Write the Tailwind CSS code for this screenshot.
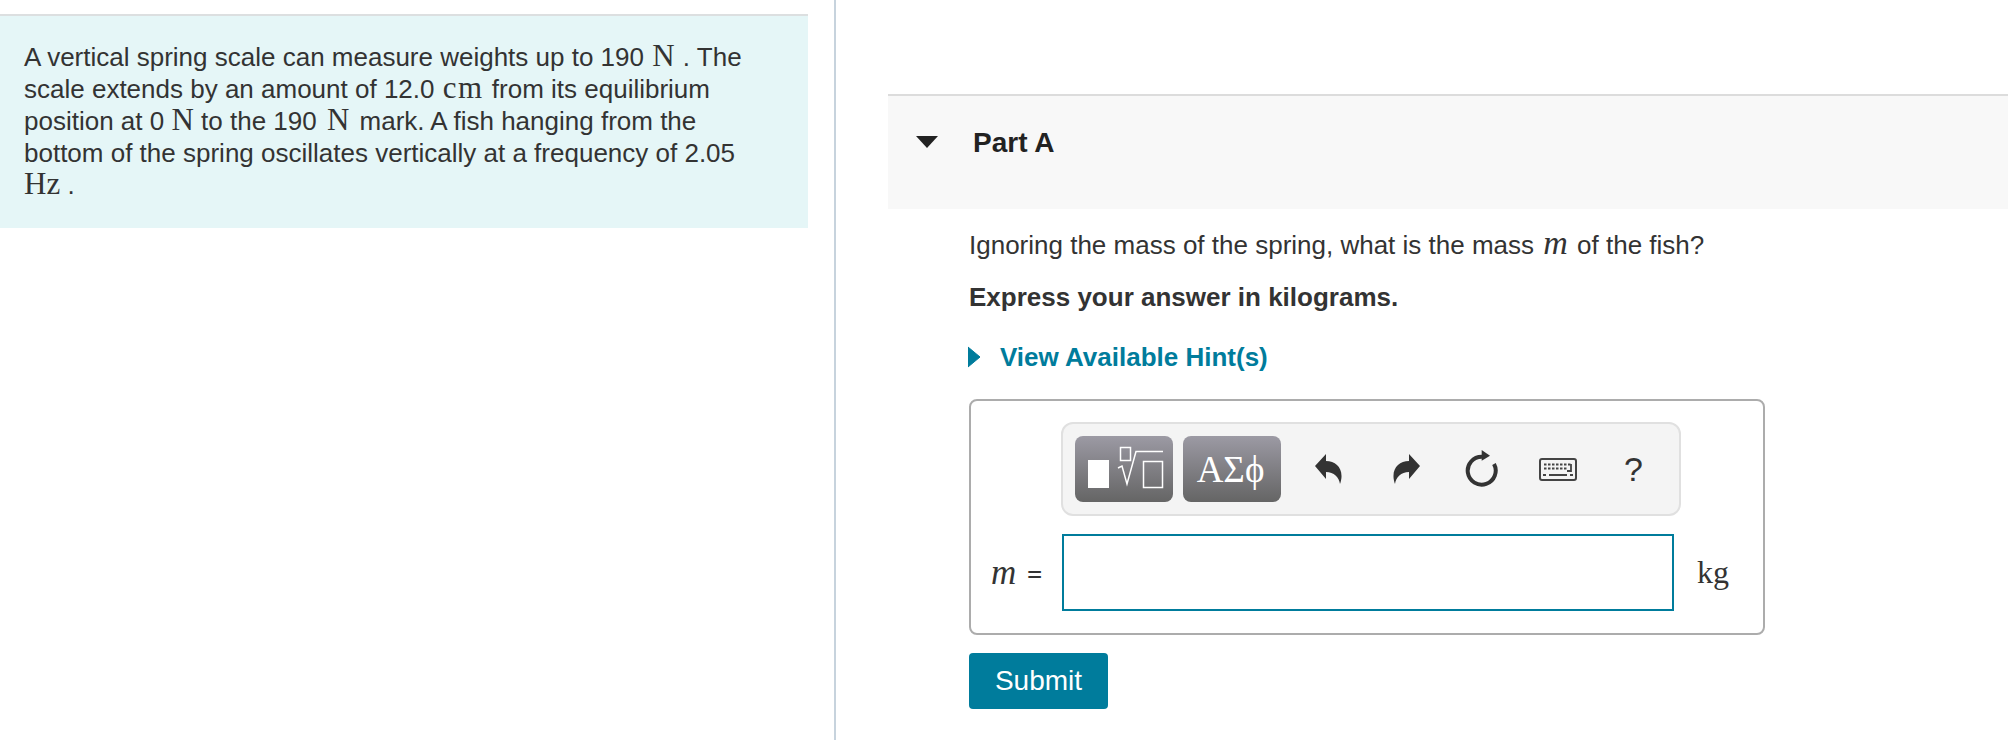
<!DOCTYPE html>
<html lang="en">
<head>
  <meta charset="UTF-8" />
  <title>Part A</title>
  <script src="https://cdn.jsdelivr.net/npm/@tailwindcss/browser@4"></script>
</head>
<body class="bg-white font-['Liberation_Sans',Arial,sans-serif] text-[#333]">
  <div class="flex h-[740px] w-[2008px] overflow-hidden">

    <!-- left column: problem statement -->
    <div class="w-[836px] h-full shrink-0 border-r-2 border-[#c7d3dd] pr-[26px] pt-[14px]">
      <div class="h-[214px] border-t-2 border-[#dcdfe0] bg-[#e5f6f7] pl-[24px] pr-[40px] pt-[25px] text-[26px] leading-[32px] whitespace-nowrap">
        A vertical spring scale can measure weights up to 190 <span class="font-['Liberation_Serif',serif] text-[31px] leading-[0] mx-px">N</span> . The<br>
        scale extends by an amount of 12.0 <span class="font-['Liberation_Serif',serif] text-[31px] leading-[0] tracking-[1.5px] mx-px">cm</span> from its equilibrium<br>
        position at 0 <span class="font-['Liberation_Serif',serif] text-[31px] leading-[0]">N</span> to the 190 <span class="font-['Liberation_Serif',serif] text-[31px] leading-[0] mx-[3px]">N</span> mark. A fish hanging from the<br>
        bottom of the spring oscillates vertically at a frequency of 2.05<br>
        <span class="font-['Liberation_Serif',serif] text-[31px] leading-[0]">Hz</span> .
      </div>
    </div>

    <!-- right column: part A -->
    <div class="flex-1 pl-[52px] pt-[94px]">
      <div class="flex h-[115px] items-start border-t-2 border-[#dcdcdc] bg-[#f8f8f8] pl-[28px] pt-[31px]">
        <svg class="mt-[9px] w-[22px] h-[12px]" viewBox="0 0 22 12"><path d="M0 0H22L11 12Z" fill="#222"/></svg>
        <h2 class="ml-[35px] text-[28px] leading-[32px] font-bold text-[#222]">Part A</h2>
      </div>

      <div class="pl-[81px] pr-[240px]">
        <p class="mt-[20px] text-[26px] leading-[32px] whitespace-nowrap">Ignoring the mass of the spring, what is the mass <span class="font-['Liberation_Serif',serif] italic text-[34px] leading-[0] mx-[2px]">m</span> of the fish?</p>
        <p class="mt-[20px] text-[26px] leading-[32px] font-bold">Express your answer in kilograms.</p>

        <div class="mt-[28px] flex items-center">
          <svg class="-ml-px w-[12px] h-[22px]" viewBox="0 0 12 22"><path d="M0 1L12 11L0 21Z" fill="#007c9c" stroke="#007c9c" stroke-linejoin="round"/></svg>
          <span class="ml-[20px] text-[26px] leading-[32px] font-bold text-[#007c9c]">View Available Hint(s)</span>
        </div>

        <div class="mt-[26px] h-[236px] w-[796px] rounded-[8px] border-2 border-[#acacac]">
          <div class="ml-[90px] mt-[21px] flex h-[94px] w-[620px] items-center rounded-[12px] border-2 border-[#e0e0e0] bg-[#f4f4f4] pl-[12px]">
            <div class="h-[66px] w-[98px] rounded-[8px] bg-gradient-to-b from-[#9c9aa4] to-[#656565]">
              <svg class="w-[98px] h-[66px]" viewBox="0 0 98 66" fill="none" stroke="#fff" stroke-width="1.5">
                <rect x="13" y="24" width="21" height="28" fill="#fff" stroke="none"/>
                <rect x="45.500" y="11.500" width="10" height="13"/>
                <path d="M43 32L47 30L52 48L61 15.500H88"/>
                <rect x="68.500" y="25.500" width="19" height="26"/>
              </svg>
            </div>
            <div class="ml-[10px] flex h-[66px] w-[98px] items-center justify-center rounded-[8px] bg-gradient-to-b from-[#9c9aa4] to-[#656565] pr-[3px] font-['Liberation_Serif',serif] text-[37px] leading-none text-white">ΑΣϕ</div>

            <svg class="ml-[33px] w-[30px] h-[32px]" viewBox="0 0 30 32"><path d="M1 13L12 1V8C23 8 31 17 26 31C25 24 20 19 12 19V26Z" fill="#333"/></svg>
            <svg class="ml-[47px] w-[30px] h-[32px]" viewBox="0 0 30 32"><path d="M29 13L18 1V8C7 8 -1 17 4 31C5 24 10 19 18 19V26Z" fill="#333"/></svg>
            <svg class="ml-[44px] w-[34px] h-[38px]" viewBox="0 0 34 38" fill="none"><path d="M17 6.700A14 14 0 1 0 29 14" stroke="#333" stroke-width="4"/><path d="M16.700 0L25 5.700L16.700 10.700Z" fill="#333"/></svg>
            <svg class="ml-[40px] w-[38px] h-[23px]" viewBox="0 0 38 23">
              <rect x="1" y="1" width="36" height="21" rx="2" fill="none" stroke="#444" stroke-width="2"/>
              <path d="M5 6.500H33M5 10.500H28" stroke="#444" stroke-width="2" stroke-dasharray="2.500 1.500"/>
              <path d="M32 6V13H28M10 17H28M4 17H7M31 17H34" stroke="#444" stroke-width="1.800" fill="none"/>
            </svg>
            <span class="ml-[47px] text-[34px] leading-none text-[#333]">?</span>
          </div>

          <div class="mt-[18px] flex items-center">
            <span class="ml-[20px] w-[71px] font-['Liberation_Serif',serif] text-[27px] leading-none whitespace-nowrap"><i class="text-[35px]">m</i> <b class="ml-[4px]">=</b></span>
            <div class="h-[77px] w-[612px] border-2 border-[#007c9c] bg-white"></div>
            <span class="ml-[23px] -mt-[2px] font-['Liberation_Serif',serif] text-[32px] leading-none">kg</span>
          </div>
        </div>

        <button class="mt-[18px] flex h-[56px] w-[139px] items-center justify-center rounded-[4px] bg-[#007c9c] text-[28px] text-white">Submit</button>
      </div>
    </div>
  </div>
</body>
</html>
